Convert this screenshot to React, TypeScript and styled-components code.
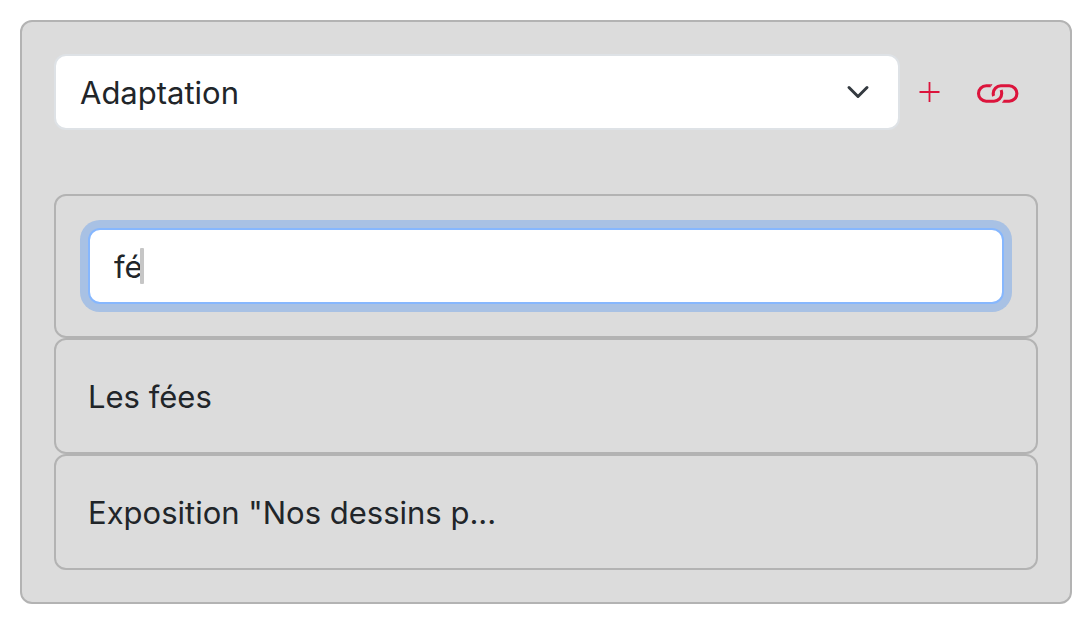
import React, { useState } from "react";
import styled, { createGlobalStyle } from "styled-components";

const GlobalStyle = createGlobalStyle`
  *, *::before, *::after { box-sizing: border-box; }
  body {
    margin: 0;
    background: #fff;
    color: #212529;
    font-family: Inter, "Liberation Sans", sans-serif;
    font-size: 31px;
    line-height: 48px;
  }
`;

const Page = styled.main`
  padding: 20px;
`;

const Panel = styled.section`
  padding: 32px;
  border: 2px solid #b3b3b3;
  border-radius: 12px;
  background: #dcdcdc;
`;

const Toolbar = styled.div`
  display: flex;
  align-items: center;
  margin-bottom: 64px;
`;

const SelectWrap = styled.div`
  position: relative;
  flex: 1;
  min-width: 0;
`;

const Select = styled.select`
  display: block;
  width: 100%;
  height: 76px;
  padding: 2px 72px 0 24px;
  border: 2px solid #dee2e6;
  border-radius: 12px;
  background: #fff;
  color: inherit;
  font: inherit;
  appearance: none;
`;

const Chevron = styled.svg`
  position: absolute;
  top: 26px;
  right: 30px;
  width: 24px;
  height: 24px;
  pointer-events: none;
`;

const IconButton = styled.button<{ $wide?: boolean }>`
  display: flex;
  align-items: center;
  height: 76px;
  padding: ${(p) => (p.$wide ? "0 20px 0 16px" : "0 20px")};
  border: 0;
  background: none;
  color: #dc143c;
  cursor: pointer;
`;

const Card = styled.div`
  padding: 32px;
  border: 2px solid #b3b3b3;
  border-radius: 12px;
`;

const SearchField = styled.div`
  position: relative;
`;

const SearchInput = styled.input`
  display: block;
  width: 100%;
  height: 76px;
  padding: 0 24px;
  border: 2px solid #86b7fe;
  border-radius: 12px;
  outline: 0;
  background: #fff;
  box-shadow: 0 0 0 8px rgba(13, 110, 253, 0.25);
  color: inherit;
  font: inherit;
  caret-color: transparent;
`;

const Caret = styled.span`
  position: absolute;
  top: 20px;
  left: 52px;
  width: 4px;
  height: 36px;
  border-radius: 1px;
  background: #c6c6c6;
  pointer-events: none;
`;

const Results = styled.ul`
  margin: 0;
  padding: 0;
  list-style: none;
`;

const ResultButton = styled.button`
  display: block;
  width: 100%;
  padding: 33px 32px 31px;
  border: 2px solid #b3b3b3;
  border-radius: 12px;
  background: none;
  color: inherit;
  font: inherit;
  text-align: left;
  cursor: pointer;
`;

const results = ["Les fées", 'Exposition "Nos dessins p...'];

export default function App() {
  const [query, setQuery] = useState("fé");
  return (
    <>
      <GlobalStyle />
      <Page>
        <Panel>
          <Toolbar>
            <SelectWrap>
              <Select aria-label="Type de relation" defaultValue="adaptation">
                <option value="adaptation">Adaptation</option>
              </Select>
              <Chevron viewBox="0 0 16 16" fill="none" aria-hidden="true">
                <path
                  d="m2 5 6 6 6-6"
                  stroke="#343a40"
                  strokeWidth="2"
                  strokeLinecap="round"
                  strokeLinejoin="round"
                />
              </Chevron>
            </SelectWrap>
            <IconButton type="button" aria-label="Ajouter">
              <svg width="20" height="20" viewBox="0 0 20 20" fill="none" overflow="visible" aria-hidden="true">
                <path d="M9.5 0v20M-.5 10h20" stroke="currentColor" strokeWidth="1.8" />
              </svg>
            </IconButton>
            <IconButton type="button" aria-label="Lier" $wide>
              <svg width="42" height="24" viewBox="-1 -3.5 42 24" fill="none" overflow="visible" aria-hidden="true">
                <g stroke="currentColor" strokeWidth="3.1">
                  <path d="M13.6 2.3H9.2a7.7 7.7 0 0 0 0 15.4h7.8a7.7 7.7 0 0 0 7.7-7.7c0-1.4-.1-2.3-.6-3.5" />
                  <path d="M26.8 17.7h5.4a7.7 7.7 0 0 0 0-15.4h-8.3a7.7 7.7 0 0 0-7.7 7.7c0 1 .1 1.6.5 2.5" />
                </g>
                <path d="M13.5.75h2l-2 3.1zM26.9 19.250h-2l2-3.1z" fill="currentColor" />
              </svg>
            </IconButton>
          </Toolbar>
          <Card>
            <SearchField>
              <SearchInput
                type="text"
                aria-label="Rechercher"
                value={query}
                onChange={(e) => setQuery(e.target.value)}
              />
              <Caret />
            </SearchField>
          </Card>
          <Results>
            {results.map((title) => (
              <li key={title}>
                <ResultButton type="button">{title}</ResultButton>
              </li>
            ))}
          </Results>
        </Panel>
      </Page>
    </>
  );
}
